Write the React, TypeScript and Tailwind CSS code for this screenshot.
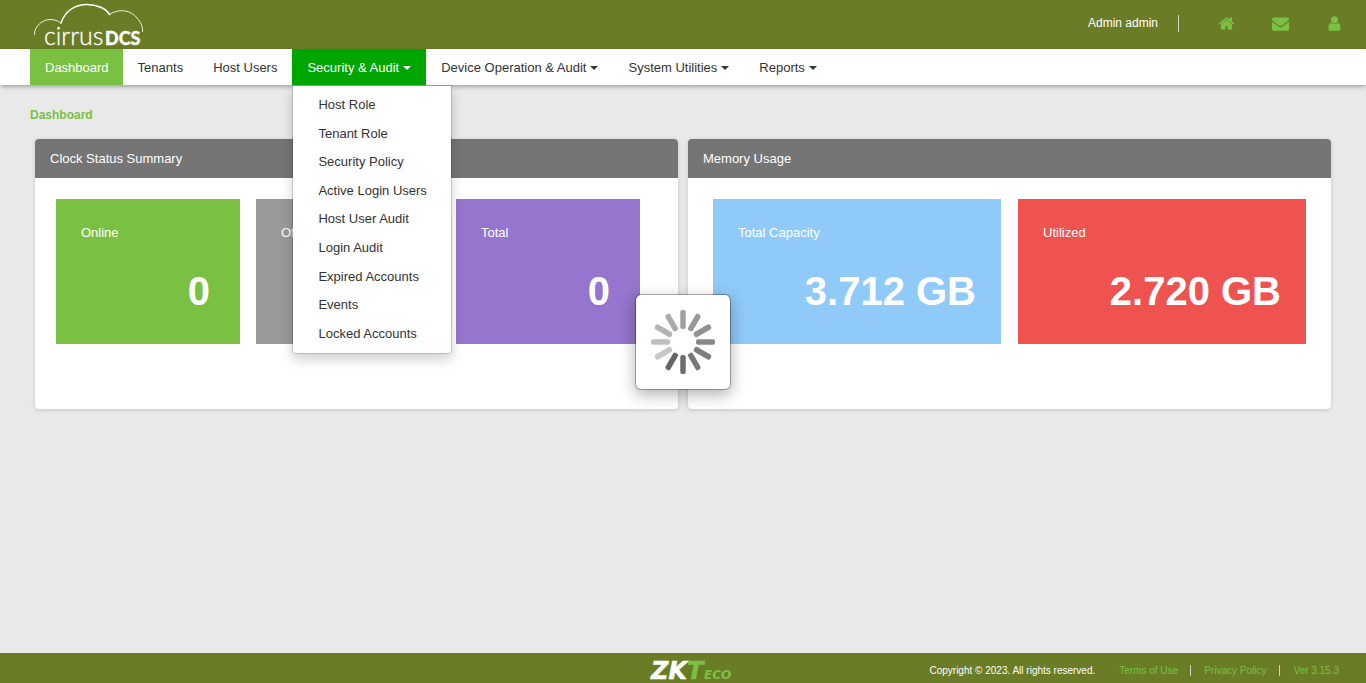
import React from "react";

const menuItems = [
  "Host Role",
  "Tenant Role",
  "Security Policy",
  "Active Login Users",
  "Host User Audit",
  "Login Audit",
  "Expired Accounts",
  "Events",
  "Locked Accounts",
];

const spokes = [
  "#a0a0a0", "#989898", "#909090", "#888888", "#7f7f7f", "#777777",
  "#6e6e6e", "#666666", "#c8c8c8", "#bfbfbf", "#b4b4b4", "#aaaaaa",
];

function Logo() {
  return (
    <svg viewBox="0 0 112 48" className="h-12 w-28" role="img" aria-label="cirrus DCS">
      <g fill="none" stroke="#fff" strokeLinecap="round">
        <path d="M2.500 34.500C2 26 11 19.500 18 19.500C22 19.500 26 20.500 29 23" strokeWidth="1" strokeOpacity="0.850" />
        <path d="M29 23C33 11 43 4.500 55 4.500C65 4.500 74 8.500 77.500 14.500" strokeWidth="1.500" />
        <path d="M77.500 14.500C87 8 99 10 105 18C109 22 111 27 110.500 31.500" strokeWidth="1" strokeOpacity="0.850" />
      </g>
      <text x="12" y="44.500" fill="#fff" stroke="#fff" strokeWidth="0.300" fontFamily="Lato, sans-serif" fontWeight="300" fontSize="25">cirrus</text>
      <text x="73" y="44.500" fill="#fff" stroke="#fff" strokeWidth="0.300" fontFamily="Lato, sans-serif" fontWeight="900" fontSize="18">DCS</text>
    </svg>
  );
}

function ZkLogo() {
  return (
    <svg viewBox="0 0 84 24" className="h-6 w-[84px]" role="img" aria-label="ZKTeco">
      <g fontFamily="DejaVu Sans, sans-serif" fontWeight="700" fontStyle="italic">
        <text x="1" y="20.500" fontSize="24" fill="#fff" stroke="#fff" strokeWidth="0.500">ZK</text>
        <text x="37" y="20.500" fontSize="24" fill="#7ac143" stroke="#7ac143" strokeWidth="0.500">T</text>
        <text x="54" y="20.500" fontSize="12" fill="#7ac143">ECO</text>
      </g>
    </svg>
  );
}

function Caret() {
  return <span className="ml-1 border-x-4 border-t-4 border-x-transparent border-t-current" />;
}

function NavLink({ label, className = "px-[15px]", caret = false }: { label: string; className?: string; caret?: boolean }) {
  return (
    <a href="#" className={`flex h-9 items-center pt-0.5 ${className}`}>
      {label}
      {caret && <Caret />}
    </a>
  );
}

function HeaderIcon({ label, d, className }: { label: string; d: string; className: string }) {
  return (
    <a href="#" aria-label={label} className="flex w-[18px] justify-center">
      <svg viewBox="0 0 1792 1792" fill="currentColor" className={className}>
        <path d={d} />
      </svg>
    </a>
  );
}

function Tile({ label, value, className }: { label: string; value: string; className: string }) {
  return (
    <div className={`h-[145px] pt-6 text-white ${className}`}>
      <div className="leading-5">{label}</div>
      <div className="mt-6 text-right text-[40px] leading-[48px] font-bold">{value}</div>
    </div>
  );
}

function Panel({ title, children }: { title: string; children: React.ReactNode }) {
  return (
    <section className="overflow-hidden rounded bg-white shadow-[0_1px_4px_rgba(0,0,0,0.15)]">
      <h2 className="bg-[#757575] px-[15px] text-white leading-[39px]">{title}</h2>
      {children}
    </section>
  );
}

export default function App() {
  return (
    <div className="flex min-h-screen flex-col bg-[#e9e9e9] font-['Liberation_Sans',Arial,sans-serif] text-[13px] text-[#333]">
      <header className="flex h-[49px] items-start justify-between bg-[#6a7c26] pr-[23px] pl-8">
        <a href="#"><Logo /></a>
        <div className="flex h-[47px] items-center text-[#7ac143]">
          <span className="border-r border-[#d0d6bc] pr-5 text-xs leading-[17px] text-white">Admin admin</span>
          <div className="ml-[38px] flex items-center gap-9">
            <HeaderIcon label="Home" className="size-[17px]" d="M1472 992v480q0 26-19 45t-45 19h-384v-384h-256v384h-384q-26 0-45-19t-19-45v-480q0-1 .5-3t.5-3l575-474 575 474q1 2 1 6zm223-69l-62 74q-8 9-21 11h-3q-13 0-21-7l-692-577-692 577q-12 8-24 7-13-2-21-11l-62-74q-8-10-7-23.500t11-21.500l719-599q32-26 76-26t76 26l244 204v-195q0-14 9-23t23-9h192q14 0 23 9t9 23v408l219 182q10 8 11 21.500t-7 23.500z" />
            <HeaderIcon label="Messages" className="size-[17px]" d="M1792 710v794q0 66-47 113t-113 47h-1472q-66 0-113-47t-47-113v-794q44 49 101 87 362 246 497 345 57 42 92.500 65.500t94.500 48 110 24.500h2q51 0 110-24.500t94.500-48 92.500-65.500q170-123 498-345 57-39 100-87zm0-294q0 79-49 151t-122 123q-376 261-468 325-10 7-42.500 31t-54 38.500-52 32.500-57.500 27-50 9h-2q-23 0-50-9t-57.500-27-52-32.500-54-38.500-42.500-31q-91-64-262-182.500t-205-142.500q-62-42-117-115.500t-55-136.500q0-78 41.500-130t118.500-52h1472q65 0 112.500 47t47.500 113z" />
            <HeaderIcon label="Account" className="size-[17px]" d="M1536 1399q0 109-62.500 187t-150.500 78h-854q-88 0-150.500-78t-62.500-187q0-85 8.500-160.500t31.500-152 58.500-131 94-89 134.500-34.500q131 128 313 128t313-128q76 0 134.500 34.500t94 89 58.500 131 31.500 152 8.500 160.500zm-256-887q0 159-112.500 271.500t-271.500 112.500-271.500-112.500-112.500-271.500 112.500-271.500 271.500-112.500 271.500 112.500 112.500 271.500z" />
          </div>
        </div>
      </header>

      <nav className="flex bg-white px-[30px] shadow-[0_2px_5px_-1px_rgba(0,0,0,0.4)]">
        <NavLink label="Dashboard" className="bg-[#7ac143] pr-[14px] pl-[15px] text-white" />
        <NavLink label="Tenants" />
        <NavLink label="Host Users" />
        <div className="relative">
          <NavLink label="Security & Audit" caret className="bg-[#00a600] px-[15px] text-white" />
          <ul className="absolute top-full left-0 z-10 grid h-[269px] w-40 auto-rows-fr rounded-b border border-black/15 bg-white bg-clip-padding py-[5px] shadow-[0_6px_12px_rgba(0,0,0,0.175)]">
            {menuItems.map((item) => (
              <li key={item} className="flex items-center">
                <a href="#" className="w-full pl-[25px] leading-5 whitespace-nowrap">{item}</a>
              </li>
            ))}
          </ul>
        </div>
        <NavLink label="Device Operation & Audit" caret />
        <NavLink label="System Utilities" caret />
        <NavLink label="Reports" caret />
      </nav>

      <main className="flex-1 px-[35px] pt-5">
        <h1 className="-ml-[5px] text-xs leading-5 font-bold text-[#7ac143]">Dashboard</h1>
        <div className="mt-[14px] grid grid-cols-2 gap-[10px]">
          <Panel title="Clock Status Summary">
            <div className="grid grid-cols-3 gap-4 pt-[21px] pr-[38px] pb-[65px] pl-[21px]">
              <Tile label="Online" value="0" className="bg-[#7ac143] pr-[30px] pl-[25px]" />
              <Tile label="Offline" value="0" className="bg-[#999] pr-[30px] pl-[25px]" />
              <Tile label="Total" value="0" className="bg-[#9575cd] pr-[30px] pl-[25px]" />
            </div>
          </Panel>
          <Panel title="Memory Usage">
            <div className="grid grid-cols-2 gap-[17px] px-[25px] pt-[21px] pb-[65px]">
              <Tile label="Total Capacity" value="3.712 GB" className="bg-[#90caf9] px-[25px]" />
              <Tile label="Utilized" value="2.720 GB" className="bg-[#ef5350] px-[25px]" />
            </div>
          </Panel>
        </div>
      </main>

      <footer className="grid h-[30px] grid-cols-[1fr_auto_1fr] items-center bg-[#6a7c26] pr-[27px] text-[10px] text-[#7ac143]">
        <span />
        <div className="pt-1 pl-11"><ZkLogo /></div>
        <div className="flex items-center justify-end pt-1 leading-[11px] whitespace-nowrap">
          <span className="mr-6 text-white">Copyright © 2023. All rights reserved.</span>
          <a href="#" className="border-r border-[#d0d6bc] pr-3">Terms of Use</a>
          <a href="#" className="border-r border-[#d0d6bc] px-[13px]">Privacy Policy</a>
          <span className="pl-[13px]">Ver 3.15.3</span>
        </div>
      </footer>

      <div role="status" aria-label="Loading" className="fixed inset-0 z-20 m-auto flex size-24 items-center justify-center rounded-md border border-black/30 bg-white bg-clip-padding shadow-[0_5px_15px_rgba(0,0,0,0.3)]">
        <svg viewBox="-32 -32 64 64" className="size-16">
          {spokes.map((color, i) => (
            <rect key={color} x="-2.750" y="-32" width="5.500" height="19" rx="2" fill={color} transform={`rotate(${i * 30})`} />
          ))}
        </svg>
      </div>
    </div>
  );
}
